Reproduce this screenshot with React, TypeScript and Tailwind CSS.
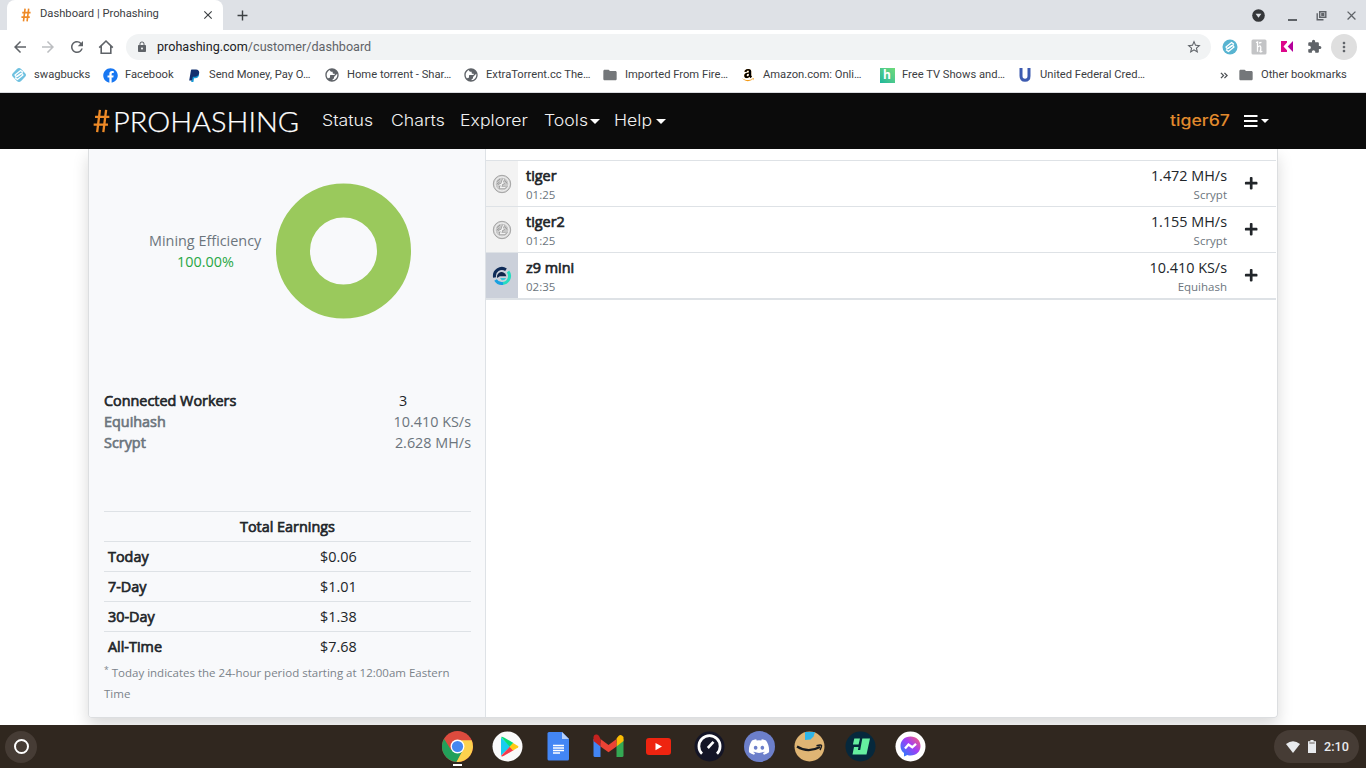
import React from "react";
import {
  MdArrowBack, MdArrowForward, MdRefresh, MdOutlineHome, MdLock, MdStarBorder,
  MdExtension, MdMoreVert, MdFolder, MdPublic, MdClose, MdAdd,
} from "react-icons/md";
import { FaAmazon, FaFacebook, FaDiscord, FaPlus } from "react-icons/fa";

const Swag = ({ round = false }: { round?: boolean }) => (
  <svg width="16" height="16" viewBox="0 0 16 16">
    {round ? <circle cx="8" cy="8" r="7.5" fill="#58b4d1" /> : <rect x="2.3" y="2.3" width="11.4" height="11.4" rx="3" transform="rotate(45 8 8)" fill="#6fc1e0" />}
    <g fill="none" stroke="#fff" strokeWidth="1.3" strokeLinecap="round" strokeLinejoin="round">
      <path d="M11.6 4.9 9.6 3.4 4 7.9Q4.8 10 6.5 9.2L11 5.9" />
      <path d="M4.4 11.1 6.4 12.6 12 8.1Q11.2 6 9.5 6.8L5 10.1" />
    </g>
  </svg>
);

const Hash = ({ className, weight }: { className: string; weight: number }) => (
  <svg className={className} viewBox="0 0 18 26" fill="none" stroke="#ee8a27" strokeWidth={weight}>
    <path d="M7.3 1 4.3 25M14 1 11 25M2 8.5H17.5M.5 17H16" />
  </svg>
);

const PayPal = () => (
  <svg width="11" height="13" viewBox="0 0 11 13">
    <path fill="#179bd7" d="M4 3.5h5.2c1.5.8 1.4 5.7-3 5.7H5L4.4 13H2.2Z" />
    <path fill="#12306f" d="M2 1Q2.1.4 2.7.4H7c5.2.5 3.7 7.4-1.5 7.4H3.9L3 11.6H.2Z" />
  </svg>
);

const Amazon = () => (
  <span className="relative flex h-[14px] w-[14px] justify-center">
    <FaAmazon className="size-[14px] text-[#f49b19]" />
    <span className="absolute inset-x-0 top-0 h-[9.5px] overflow-hidden"><FaAmazon className="size-[14px] text-black" /></span>
  </span>
);

const Globe = () => <MdPublic className="size-4 -scale-x-100 text-[#5f6368]" />;

const Bookmark = ({ icon, label, className }: { icon: React.ReactNode; label: string; className: string }) => (
  <div className={"flex shrink-0 items-center " + className}>
    <span className="flex w-4 shrink-0 justify-center">{icon}</span>
    <span className="ml-[7px] whitespace-nowrap">{label}</span>
  </div>
);

const Bookmarks = () => (
  <div className="flex h-[30px] items-center border-b border-[#dadce0] pl-[11px] pb-[4px] text-[11.2px] text-[#3c4043]">
    <Bookmark className="w-[91px]" icon={<Swag />} label="swagbucks" />
    <Bookmark className="w-[84px]" icon={<FaFacebook className="size-[15px] text-[#1877f2]" />} label="Facebook" />
    <Bookmark className="w-[138px]" icon={<PayPal />} label="Send Money, Pay O…" />
    <Bookmark className="w-[139px]" icon={<Globe />} label="Home torrent - Shar…" />
    <Bookmark className="w-[139px]" icon={<Globe />} label="ExtraTorrent.cc The…" />
    <Bookmark className="w-[138px]" icon={<MdFolder className="size-4 text-[#74777a]" />} label="Imported From Fire…" />
    <Bookmark className="w-[139px]" icon={<Amazon />} label="Amazon.com: Onli…" />
    <Bookmark
      className="w-[138px]"
      icon={
        <span className="flex h-[15px] w-[15px] shrink-0 items-center justify-center bg-linear-to-tr from-[#16b69b] to-[#6edb78] font-['Open_Sans',sans-serif] text-[12px] font-bold text-white">h</span>
      }
      label="Free TV Shows and…"
    />
    <Bookmark
      className="w-[203px]"
      icon={
        <svg width="14" height="16" viewBox="0 0 14 16">
          <path d="M3 1V9Q3 13.3 7 13.3T11 9V1" fill="none" stroke="#3d5bb0" strokeWidth="3" />
        </svg>
      }
      label="United Federal Cred…"
    />
    <svg className="mr-[10px]" width="8" height="7" viewBox="0 0 9 8" fill="none" stroke="#4f5357" strokeWidth="1.5"><path d="M1 1 4 4 1 7M5 1 8 4 5 7" /></svg>
    <Bookmark className="" icon={<MdFolder className="size-4 text-[#74777a]" />} label="Other bookmarks" />
  </div>
);

const Browser = () => (
  <div className="h-[93px] shrink-0 bg-white font-['Roboto',sans-serif]">
    <div className="flex h-[30px] items-center bg-[#dee1e6] pl-[7px]">
      <div className="flex h-full w-[216px] items-center rounded-t-[8px] bg-white pl-[13px] text-[11.2px] text-[#3c4043]">
        <Hash className="h-[14px] w-[12px]" weight={3} />
        <span className="ml-[8px] w-[161px] pb-px">Dashboard | Prohashing</span>
        <MdClose className="size-[14px] text-[#3c4043]" />
      </div>
      <MdAdd className="ml-[11px] size-[17px] text-[#3c4043]" />
      <div className="ml-auto flex items-center pr-[7px]">
        <svg width="13" height="13" viewBox="0 0 13 13"><circle cx="6.5" cy="6.5" r="6.3" fill="#35373a" /><path d="M3.6 4.8h5.8L6.5 8.8z" fill="#dee1e6" /></svg>
        <svg className="ml-[22px]" width="11" height="13" viewBox="0 0 11 13"><path d="M1 11h9" stroke="#5f6368" strokeWidth="2" /></svg>
        <svg className="ml-[18px]" width="11" height="11" viewBox="0 0 11 11" fill="none" stroke="#5f6368" strokeWidth="1.4"><path d="M3.7 1.7H9.8V7.3H3.7ZM1.2 3.2V9.8H7.5" /><path d="M5.9 3.7h1.8v1.6H5.9z" /></svg>
        <MdClose className="ml-[17px] size-[15px] text-[#5f6368]" />
      </div>
    </div>
    <div className="flex h-[33px] items-center pl-[11px] text-[#5f6368]">
      <MdArrowBack className="size-[18px]" />
      <MdArrowForward className="ml-[10px] size-[18px] text-[#bcbec1]" />
      <MdRefresh className="ml-[11px] size-[18px]" />
      <svg className="ml-[12px]" width="16" height="16" viewBox="0 0 16 16" fill="none" stroke="currentColor" strokeWidth="1.6"><path d="M1.2 8.6 8 2 14.8 8.6M3.2 7V14.2H12.8V7" /></svg>
      <div className="ml-[12px] flex h-[26px] w-[1085px] items-center rounded-full bg-[#f1f3f4] pr-[9px] pl-[10px] text-[12.6px]">
        <MdLock className="size-[12px]" />
        <span className="ml-[9px] pt-px text-[#5f6368]"><span className="text-[#202124]">prohashing.com</span>/customer/dashboard</span>
        <MdStarBorder className="ml-auto size-4" />
      </div>
      <span className="ml-[11px]"><Swag round /></span>
      <svg className="ml-[13px]" width="16" height="16" viewBox="0 0 16 16"><rect x=".5" y=".5" width="15" height="15" rx="1.5" fill="#c3c4c6" /><path d="M5 3.5 6.5 3V12.8M6.5 8.2Q9.5 5.5 9.8 8.2T9 12.5Q10 13.5 11.2 11.8M8 4 10.5 3.4" fill="none" stroke="#fff" strokeWidth="1.3" /></svg>
      <svg className="ml-[14px]" width="12" height="11" viewBox="0 0 12 11"><path d="M0 0H6V1.5L2.5 5.5 6 9.2V11H0Z" fill="#dd078b" /><path d="M12 0V11L6.7 5.5Z" fill="#b5009b" /></svg>
      <MdExtension className="ml-[14px] size-[15px]" />
      <span className="ml-[9px] flex size-[26px] items-center justify-center rounded-full bg-[#dfdfdf]"><MdMoreVert className="size-4" /></span>
    </div>
    <Bookmarks />
  </div>
);

const Caret = () => <svg className="ml-[4px]" width="10" height="5" viewBox="0 0 10 5"><path d="M0 0H10L5 5Z" fill="#fff" /></svg>;

const Wide = ({ children, className }: { children: string; className: string }) => (
  <span className={"block shrink-0 whitespace-nowrap " + className}><span className="inline-block origin-left scale-x-[1.14]">{children}</span></span>
);

const SiteNav = () => (
  <nav className="flex h-[56px] shrink-0 items-center bg-[#0b0b0b] pl-[93px] font-['Inter',sans-serif] text-[15.5px] font-light text-[#f2f2f2]">
    <Hash className="h-[24px] w-[17px]" weight={2.5} />
    <span className="ml-[3px] w-[209px] whitespace-nowrap"><span className="inline-block origin-left scale-x-[1.035] font-['Lato',sans-serif] text-[28px] text-white [-webkit-text-stroke:0.25px_white]">PROHASHING</span></span>
    <Wide className="w-[69px]">Status</Wide>
    <Wide className="w-[69px]">Charts</Wide>
    <Wide className="w-[84px]">Explorer</Wide>
    <Wide className="w-[42px]">Tools</Wide><Caret />
    <Wide className="ml-[14px] w-[38px]">Help</Wide><Caret />
    <Wide className="ml-auto w-[70px] font-medium text-[#e18a2d]">tiger67</Wide>
    <svg className="ml-[4px]" width="14" height="12" viewBox="0 0 14 12"><path d="M0 1h13.5M0 6h13.5M0 11h13.5" stroke="#fff" strokeWidth="2" /></svg>
    <svg className="ml-[3px]" width="8" height="4" viewBox="0 0 8 4"><path d="M0 0H8L4 4Z" fill="#fff" /></svg>
    <span className="w-[97px]" />
  </nav>
);

const Litecoin = () => (
  <svg width="20" height="20" viewBox="0 0 20 20" fill="none">
    <circle cx="10" cy="10" r="8.7" fill="#d2d2d2" stroke="#969696" strokeWidth=".8" />
    <circle cx="10" cy="10" r="7" fill="#c9c9c9" stroke="#f4f4f4" />
    <path d="M5 7.5 8 5M4.8 10.2 7.5 8M13 6.5 15 9.5M12.5 15 15 12.5" stroke="#8b8b8b" strokeWidth=".8" />
    <path d="M11.5 5 8.5 13.5H13.5M6.5 11.5 12.5 8.5" stroke="#999" strokeWidth="2.6" />
    <path d="M11.5 5 8.5 13.5H13.5M6.5 11.5 12.5 8.5" stroke="#f2f2f2" strokeWidth="1.3" />
  </svg>
);

const Horizen = () => (
  <svg width="20" height="20" viewBox="0 0 20 20" fill="none" strokeWidth="3">
    <path d="M2.6 11.5A7.5 7.5 0 0 1 14 3.7" stroke="#0e2b58" />
    <path d="M16 5.5A7.5 7.5 0 0 1 10 17.5" stroke="#26dcc0" />
    <path d="M11 17.4A7.5 7.5 0 0 1 3.5 14" stroke="#18a0e0" />
    <path d="M5 9.8Q7 5 11 6.3 14 7.5 14.3 10.2H7.8L5.2 12Z" fill="#10264b" />
    <path d="M8 12H14.2Q12.7 14.6 9.8 14.2Z" fill="#38c5d7" />
  </svg>
);

const bold = "[-webkit-text-stroke:0.65px_currentColor]";

const workers = [
  { name: "tiger", time: "01:25", rate: "1.472 MH/s", algo: "Scrypt", ltc: true },
  { name: "tiger2", time: "01:25", rate: "1.155 MH/s", algo: "Scrypt", ltc: true },
  { name: "z9 mini", time: "02:35", rate: "10.410 KS/s", algo: "Equihash", ltc: false },
];

const earnings = [["Today", "$0.06"], ["7-Day", "$1.01"], ["30-Day", "$1.38"], ["All-Time", "$7.68"]];

const Sidebar = () => (
  <aside className="flex w-[397px] shrink-0 flex-col rounded-bl-[3px] border-r border-[#dee2e6] bg-[#f8f9fb] pr-[14px] pl-[15px]">
    <div className="flex h-[203px] shrink-0 items-center pl-[45px]">
      <div className="w-[127px] shrink-0 whitespace-nowrap text-[#6c757d]">
        <div>Mining Efficiency</div>
        <div className="w-[113px] text-center text-[#28a745]">100.00%</div>
      </div>
      <svg width="135" height="136" viewBox="0 0 135 136"><circle cx="67.5" cy="68" r="50.5" fill="none" stroke="#9ac95c" strokeWidth="34" /></svg>
    </div>
    <div className="mt-[38px] text-[#6c757d]">
      <div className="flex justify-between text-[#212529]"><span className={bold}>Connected Workers</span><span className="w-[72px]">3</span></div>
      <div className="flex justify-between"><span className={bold}>Equihash</span><span>10.410 KS/s</span></div>
      <div className="flex justify-between"><span className={bold}>Scrypt</span><span>2.628 MH/s</span></div>
    </div>
    <div className={"mt-[58px] h-[30px] border-t border-[#dee2e6] pt-[4px] text-center " + bold}>Total Earnings</div>
    {earnings.map(([k, v]) => (
      <div key={k} className="flex h-[30px] border-t border-[#dee2e6] pt-[4px] pl-[4px]"><span className={"w-[212px] " + bold}>{k}</span><span>{v}</span></div>
    ))}
    <p className="mt-[1px] text-[11.5px] text-[#7b838a]"><sup className="top-[-0.5em] text-[8.6px]">*</sup> Today indicates the 24-hour period starting at 12:00am Eastern Time</p>
  </aside>
);

const Dashboard = () => (
  <main className="h-[576px] overflow-hidden bg-white px-[88px]">
    <div className="flex h-[569px] rounded-b-[4px] border-x border-b border-[#dcdee0] font-['Open_Sans',sans-serif] text-[14.4px] leading-[21px] text-[#212529] shadow-[0_8px_16px_rgba(0,0,0,0.15)]">
      <Sidebar />
      <section className="min-w-0 flex-1 pt-[11px] pr-px">
        <div className="border-b border-[#dee2e6]">
          {workers.map((w) => (
            <div key={w.name} className="flex h-[46px] border-t border-[#dee2e6] last:h-[47px] last:border-b">
              <div className={"flex w-[32px] items-center justify-center " + (w.ltc ? "bg-[#f3f3f3]" : "bg-[#cbd0da]")}>{w.ltc ? <Litecoin /> : <Horizen />}</div>
              <div className="flex-1 pt-[4px] pl-[8px]">
                <div className={bold}>{w.name}</div>
                <div className="text-[11.5px] leading-[17px] text-[#6c757d]">{w.time}</div>
              </div>
              <div className="pt-[4px] text-right">
                <div>{w.rate}</div>
                <div className="text-[11.5px] leading-[17px] text-[#6c757d]">{w.algo}</div>
              </div>
              <div className="flex w-[49px] items-center justify-center"><FaPlus className="size-[14.4px]" /></div>
            </div>
          ))}
        </div>
      </section>
    </div>
  </main>
);

const Shelf = () => (
  <footer className="flex h-[43px] shrink-0 items-center bg-[#30271f] pl-[5px] font-['Roboto',sans-serif]">
    <div className="flex size-8 items-center justify-center rounded-full bg-[#463c35]"><span className="size-[15px] rounded-full border-2 border-white" /></div>
    <div className="ml-[405px] flex w-[484px] items-center justify-between">
      <div className="relative size-[31px]">
        <svg width="31" height="31" viewBox="0 0 30 30">
          <circle cx="15" cy="15" r="15" fill="#dd4b3e" />
          <path d="M2 7.5A15 15 0 0 0 14 30L20.2 19 15 15 8.8 18.5Z" fill="#22a05a" />
          <path d="M28.7 9H15L20.5 18 14 30A15 15 0 0 0 28.7 9Z" fill="#fdd24d" />
          <circle cx="15" cy="15" r="6.7" fill="#fff" /><circle cx="15" cy="15" r="5.4" fill="#4587f0" />
        </svg>
        <span className="absolute top-[33px] left-[11px] h-[2px] w-[9px] bg-white" />
      </div>
      <svg width="31" height="31" viewBox="0 0 31 31">
        <circle cx="15.5" cy="15.5" r="15" fill="#fafafa" />
        <path d="M9 6.5V24.5L18.5 15.5Z" fill="#18cdef" /><path d="M9 6Q10 5.3 12 6.5L21.5 12 18 16Z" fill="#07dd78" />
        <path d="M9 25Q10 26 12 24.8L21.5 19.3 18 15.5Z" fill="#f63a4c" /><path d="M21 12 26 15Q27 15.7 26 16.4L21 19.5 17.5 15.7Z" fill="#ffc914" />
      </svg>
      <svg width="31" height="31" viewBox="0 0 31 31"><path d="M6 1H19L26 8V28Q26 29.5 24.5 29.5H6Q4.5 29.5 4.5 28V2.5Q4.5 1 6 1Z" fill="#4386f5" /><path d="M19 1 26 8H19Z" fill="#b6d0fc" /><path d="M10 14.5H21M10 17H21M10 19.5H21M10 22H17" stroke="#fff" strokeWidth="1.4" /></svg>
      <svg width="31" height="31" viewBox="0 0 31 31">
        <path d="M.5 8 7.5 12V26H2Q.5 26 .5 24.5Z" fill="#4285f4" /><path d="M23.5 12 30.5 8V24.5Q30.5 26 29 26H23.5Z" fill="#34a853" />
        <path d="M23.5 7.8Q27 1 30.5 6V10L23.5 15.5Z" fill="#fbbc04" /><path d="M7.5 8 15.5 14 23.5 8V15.5L15.5 21.3 7.5 15.5Z" fill="#ea4335" /><path d="M.5 10V6.5C.5 3 4 2.8 6 5L7.5 8V15.5Z" fill="#c5221f" />
      </svg>
      <svg width="31" height="31" viewBox="0 0 31 31"><rect x="3" y="7" width="25" height="17" rx="3" fill="#ee2410" /><path d="M12.5 12V19.2L19 15.6Z" fill="#fff" /></svg>
      <svg width="31" height="31" viewBox="0 0 31 31" fill="none"><circle cx="15.5" cy="15.5" r="15" fill="#141526" /><path d="M8 22.8A10.6 10.6 0 1 1 23 22.8" stroke="#fff" strokeWidth="2.7" /><path d="M13.8 17 19.5 10.8" stroke="#fff" strokeWidth="2.6" /></svg>
      <span className="flex size-[31px] items-center justify-center rounded-full bg-[#6c7fca]"><FaDiscord className="size-[22px] text-white" /></span>
      <svg width="31" height="31" viewBox="0 0 31 31"><circle cx="15.5" cy="15.5" r="15" fill="#dfb574" /><path d="M11 1H21L19.5 5.5 16.5 8.5 11 9Z" fill="#2eb5e8" /><path d="M3 15.5Q14 22.5 26 16" fill="none" stroke="#181b20" strokeWidth="2.2" /><path d="M22.5 14.7Q27 13.5 27.5 14.5 27.8 16 26 19" fill="none" stroke="#181b20" strokeWidth="1.5" /></svg>
      <svg width="31" height="31" viewBox="0 0 31 31"><circle cx="15.5" cy="15.5" r="15" fill="#06283c" /><path d="M9.3 7.5H15L13.6 13.5H7.9ZM17.3 7.5H25L21.5 23.5H7.5L9 16H13.5L12.9 19H15.2Z" fill="#65efa0" /></svg>
      <svg width="31" height="31" viewBox="0 0 31 31">
        <defs><linearGradient id="msg" x1="0" y1="1" x2="1" y2="0"><stop stopColor="#1588ff" /><stop offset=".55" stopColor="#a13df5" /><stop offset="1" stopColor="#ff626d" /></linearGradient></defs>
        <circle cx="15.5" cy="15.5" r="15" fill="#fff" /><path d="M15.5 5.5C9.5 5.5 5.5 9.7 5.5 15 5.5 18 6.8 20.5 9 22V25.5L12.3 24Q14 24.5 15.5 24.5C21.5 24.5 25.5 20.4 25.5 15S21.5 5.5 15.5 5.5Z" fill="url(#msg)" /><path d="M10 17.6 13.5 13.6 17.3 16.3 21 12.8" fill="none" stroke="#fff" strokeWidth="2.3" />
      </svg>
    </div>
    <div className="mr-[7px] ml-auto flex h-[33px] w-[85px] items-center rounded-full bg-[#463c35] pl-[12px] text-[12.6px] font-medium text-[#e8eaed]">
      <svg width="14" height="12" viewBox="0 0 14 12"><path d="M0 3Q7-2.5 14 3L7 12Z" fill="#e8eaed" /></svg>
      <svg className="ml-[8px]" width="8" height="13" viewBox="0 0 8 13"><path d="M2.4 0H5.6V1.3H8V13H0V1.3H2.4Z" fill="#e8eaed" /><path d="M1.3 3H6.7" stroke="#463c35" strokeWidth=".8" /></svg>
      <span className="ml-[8px] pt-px">2:10</span>
    </div>
  </footer>
);

export default function App() {
  return (
    <div className="flex h-screen w-full flex-col overflow-hidden bg-white">
      <Browser />
      <SiteNav />
      <Dashboard />
      <Shelf />
    </div>
  );
}
